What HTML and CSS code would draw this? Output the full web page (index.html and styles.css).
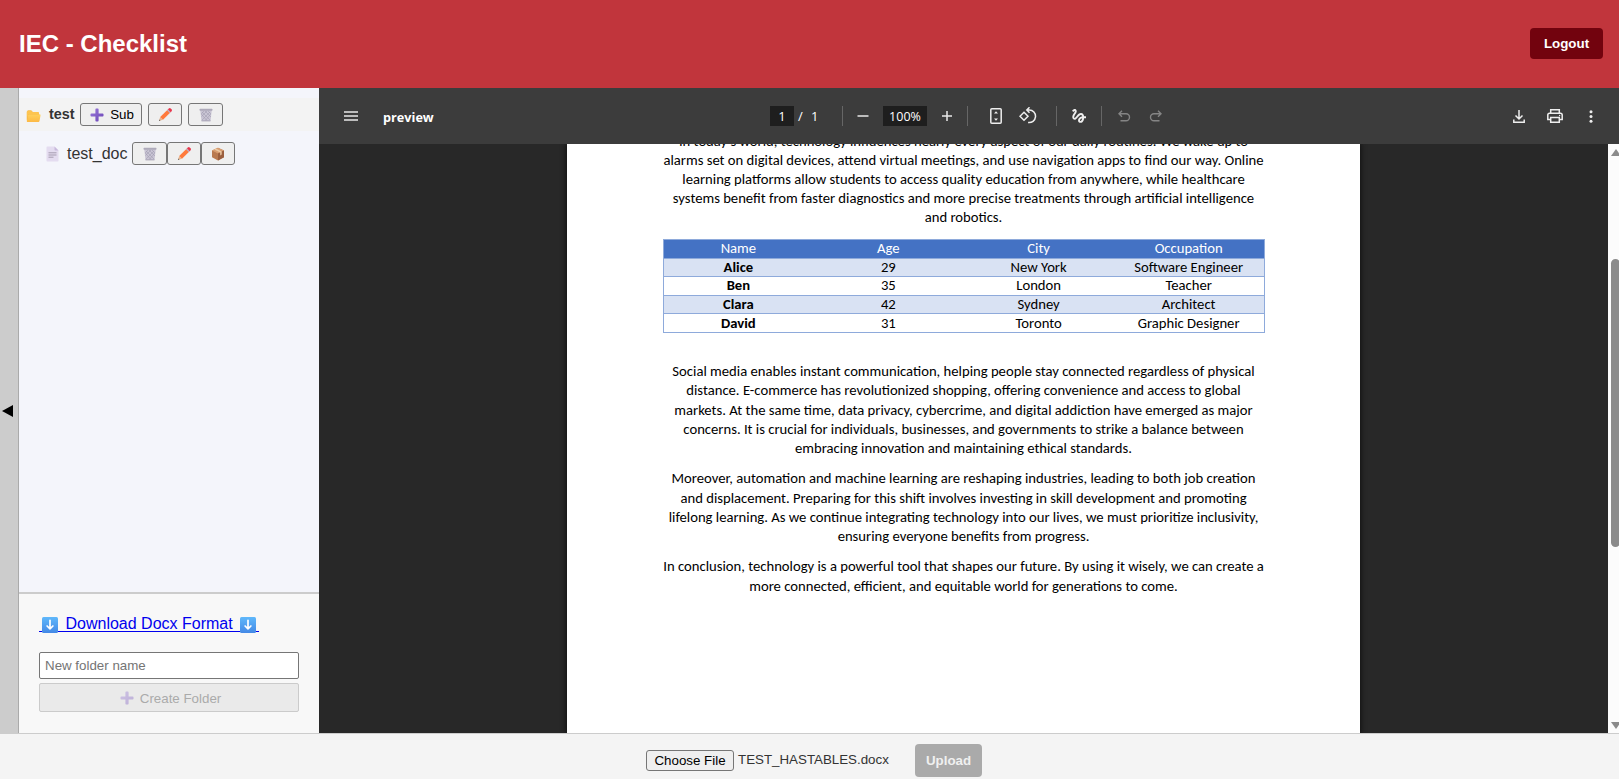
FILE: index.html
```
<!DOCTYPE html>
<html lang="en">
<head>
<meta charset="utf-8">
<title>IEC - Checklist</title>
<link rel="stylesheet" href="styles.css">
</head>
<body>
<svg class="defs" width="0" height="0" aria-hidden="true">
  <linearGradient id="purple" x1="0" y1="0" x2="1" y2="1"><stop offset="0" stop-color="#9b7bdb"/><stop offset="1" stop-color="#6a43b5"/></linearGradient>
  <linearGradient id="blue" x1="0" y1="0" x2="0" y2="1"><stop offset="0" stop-color="#5fb8fb"/><stop offset="1" stop-color="#4489e6"/></linearGradient>
  <linearGradient id="gold" x1="0" y1="0" x2="0" y2="1"><stop offset="0" stop-color="#ffd15c"/><stop offset="1" stop-color="#fdb944"/></linearGradient>
  <symbol id="plus" viewBox="0 0 14 14"><path d="M5.4 1.4q0-.9.8-.9h1.600q.8 0 .8.9v4h4q.9 0 .9.8v1.600q0 .8-.9.8h-4v4q0 .9-.8.9H6.200q-.8 0-.8-.9v-4h-4q-.9 0-.9-.8V6.200q0-.8.9-.8h4z" fill="url(#purple)"/></symbol>
  <symbol id="pencil" viewBox="0 0 16 16"><path d="M1 15l1.300-4.300 2.900 2.900z" fill="#e8b48c"/><path d="M1 15l.5-1.600 1.100 1.100z" fill="#555"/><path d="M2.300 10.700L10.200 2.800l3 3-7.900 7.900z" fill="#ff7a3c"/><path d="M9.500 3.500l1-1 3 3-1 1z" fill="#b9b3c6"/><path d="M10.500 2.500l1-1q1-.9 2 0l1 1q.9 1 0 2l-1 1z" fill="#e8364c"/></symbol>
  <symbol id="bin" viewBox="0 0 14 14"><path d="M1.200 2h11.600l-1.300 11h-9z" fill="#c9c5d4"/><path d="M3 4l8 8M6 3l6 6M9 3l3 3M2.300 6l6 7M11 4l-8 8M8 3L2.500 8.500M5 3L2.200 6M11.700 6L6 13" stroke="#a39eb1" stroke-width=".6"/><rect x=".5" y=".8" width="13" height="2" rx=".7" fill="#aeaaba"/><path d="M2.500 12.200h9v1.200h-9z" fill="#b0abbc"/></symbol>
  <symbol id="folder" viewBox="0 0 15 14"><path d="M1 3Q1 1.500 2.300 1.500h3l1.600 1.700h5q1.100 0 1.100 1.200v8H1z" fill="#e9a63a"/><path d="M3.200 5.200h10.300q1.200 0 1 1.200l-1 5.500q-.2 1.100-1.300 1.100H1.500q-.8 0-.7-1L2.100 6.200q.2-1 1.100-1z" fill="url(#gold)"/><path d="M.7 3Q.7 1.400 2.100 1.400h3l1.600 1.700h5q1.300 0 1.300 1.300v1H3.200q-1 0-1.200 1L.7 12z" fill="#fdc450"/></symbol>
  <symbol id="page" viewBox="0 0 13 16"><path d="M.5 1.200Q.5.500 1.200.500H8.500L12.500 4.500V14.800q0 .7-.7.700H1.200q-.7 0-.7-.7z" fill="#e4dcf0"/><path d="M8.500.5v3.200q0 .8.800.8h3.200z" fill="#c8b9dc"/><path d="M2.500 6.800h8M2.500 9h8M2.500 11.200h5" stroke="#a69caf"/></symbol>
  <symbol id="box" viewBox="0 0 14 14"><path d="M7 .7l6 2.700v6.900l-6 3.200-6-3.200V3.400z" fill="#b97a50"/><path d="M7 .7l6 2.700-6 3-6-3z" fill="#d89d70"/><path d="M7 6.400v7.100l6-3.200V3.400z" fill="#9b5f3e"/><path d="M3.200 2.400l6 3v3l1.500-.8V4.600L5 1.600z" fill="#ecc9a2"/></symbol>
  <symbol id="down" viewBox="0 0 16 16"><rect width="16" height="16" rx="1.500" fill="url(#blue)"/><path d="M8 3.300v8.500M5.100 9L8 11.900 10.900 9" fill="none" stroke="#fff" stroke-width="1.700" stroke-linecap="round" stroke-linejoin="round"/></symbol>
</svg>

<header class="topbar">
  <h1 class="brand">IEC - Checklist</h1>
  <button class="logout">Logout</button>
</header>

<main class="workspace">
  <div class="collapse"><svg width="11" height="14" viewBox="0 0 11 14"><path d="M11 1v12L0 7z"/></svg></div>
  <aside class="sidebar">
    <div class="tree">
      <div class="folder-row">
        <svg class="i-folder"><use href="#folder"/></svg>
        <strong class="folder-name">test</strong>
        <button class="btn btn-sub"><svg class="i14"><use href="#plus"/></svg>Sub</button>
        <button class="btn"><svg class="i16"><use href="#pencil"/></svg></button>
        <button class="btn btn-bin"><svg class="i14"><use href="#bin"/></svg></button>
      </div>
      <div class="doc-row">
        <svg class="i-page"><use href="#page"/></svg>
        <span class="doc-name">test_doc</span>
        <button class="btn btn-bin"><svg class="i14"><use href="#bin"/></svg></button>
        <button class="btn"><svg class="i16"><use href="#pencil"/></svg></button>
        <button class="btn"><svg class="i14"><use href="#box"/></svg></button>
      </div>
    </div>
    <div class="side-actions">
      <a class="download" href="#"><svg class="i-down"><use href="#down"/></svg><span>Download Docx Format</span><svg class="i-down"><use href="#down"/></svg></a>
      <input class="folder-input" placeholder="New folder name">
      <button class="create" disabled><svg class="i14"><use href="#plus"/></svg>Create Folder</button>
    </div>
  </aside>

  <section class="viewer">
    <div class="toolbar">
      <div class="tools-left">
        <svg class="menu" width="14" height="10" viewBox="0 0 14 10"><path d="M0 1h14M0 5h14M0 9h14" stroke="#e8e8e8" stroke-width="1.400"/></svg>
        <strong class="file-title">preview</strong>
      </div>
      <div class="tools-center">
        <span class="field page-field">1</span><span class="slash">/</span><span class="total">1</span>
        <i class="sep sep-a"></i>
        <svg class="minus" width="12" height="12" viewBox="0 0 12 12"><path d="M.5 6h11" stroke="#e8e8e8" stroke-width="1.500"/></svg>
        <span class="field zoom-field">100%</span>
        <svg class="plus" width="12" height="12" viewBox="0 0 12 12"><path d="M1 6h10M6 1v10" stroke="#e8e8e8" stroke-width="1.500"/></svg>
        <i class="sep sep-b"></i>
        <svg class="fit" width="12" height="16" viewBox="0 0 12 16"><rect x=".8" y=".8" width="10.400" height="14.400" rx="1" fill="none" stroke="#eee" stroke-width="1.500"/><path d="M6 3.300L8 5.600H4zM6 12.700L8 10.400H4z" fill="#eee"/></svg>
        <svg class="rotate" width="18" height="18" viewBox="0 0 18 18"><path d="M5 5.200L9 9.200 5 13.200 1 9.200z" fill="none" stroke="#eee" stroke-width="1.500"/><path d="M8 3h2.300a6.300 6.300 0 1 1-1.200 12.500M10.500.3L7.800 3l2.700 2.700" fill="none" stroke="#eee" stroke-width="1.500"/></svg>
        <i class="sep sep-c"></i>
        <svg class="draw" width="14" height="14" viewBox="2.800 3 18.200 18.200"><path fill="#eee" d="M4.590 6.890c.7-.71 1.400-1.350 1.710-1.220.5.2 0 1.030-.3 1.520-.25.42-2.860 3.890-2.860 6.310 0 1.280.48 2.340 1.340 2.980.75.56 1.740.73 2.640.46 1.070-.31 1.950-1.400 3.060-2.770 1.210-1.490 2.830-3.440 4.080-3.440 1.630 0 1.650 1.010 1.760 1.790-3.780.64-5.380 3.670-5.380 5.370 0 1.700 1.440 3.090 3.210 3.090 1.630 0 4.290-1.330 4.690-6.100H21v-2.500h-2.470c-.15-1.650-1.090-4.200-4.030-4.200-2.250 0-4.180 1.910-4.940 2.840-.58.73-2.060 2.480-2.290 2.720-.25.3-.68.84-1.110.84-.45 0-.72-.83-.36-1.920.35-1.090 1.400-2.860 1.850-3.520.78-1.140 1.300-1.920 1.300-3.280C8.950 3.690 7.310 3 6.440 3 5.120 3 3.970 4 3.720 4.250c-.36.36-.66.66-.88.93l1.750 1.710zm9.290 11.660c-.31 0-.74-.26-.74-.72 0-.6.73-2.200 2.870-2.760-.3 2.690-1.430 3.480-2.130 3.480z"/></svg>
        <i class="sep sep-d"></i>
        <svg class="undo" width="13" height="12" viewBox="0 0 13 12"><path d="M4 .8L1 3.800l3 3M1.300 3.800H8a3.500 3.500 0 0 1 0 7H2.500" fill="none" stroke="#858585" stroke-width="1.400"/></svg>
        <svg class="redo" width="13" height="12" viewBox="0 0 13 12"><path d="M9 .8l3 3-3 3M11.700 3.800H5a3.500 3.500 0 0 0 0 7h5.500" fill="none" stroke="#858585" stroke-width="1.400"/></svg>
      </div>
      <div class="tools-right">
        <svg width="12" height="13" viewBox="0 0 12 13"><path d="M6 0v8.500M2.500 5.500L6 9l3.500-3.500M.8 9.500v2.700h10.400V9.500" fill="none" stroke="#eee" stroke-width="1.500"/></svg>
        <svg class="print" width="16" height="14" viewBox="0 0 16 14"><path d="M3.700 4V.8h8.600V4M3.700 10.500H.8V6q0-1.800 1.800-1.800h10.800q1.800 0 1.800 1.800v4.500h-2.900M3.700 8.500h8.600v4.700H3.700z" fill="none" stroke="#eee" stroke-width="1.500"/><circle cx="12.600" cy="6.500" r=".7" fill="#eee"/></svg>
        <svg width="4" height="13" viewBox="0 0 4 13" fill="#eee"><circle cx="2" cy="1.700" r="1.500"/><circle cx="2" cy="6.500" r="1.500"/><circle cx="2" cy="11.300" r="1.500"/></svg>
      </div>
    </div>
    <div class="stage">
      <article class="paper">
        <p class="para first">In today's world, technology influences nearly every aspect of our daily routines. We wake up to<br>
          alarms set on digital devices, attend virtual meetings, and use navigation apps to find our way. Online<br>
          learning platforms allow students to access quality education from anywhere, while healthcare<br>
          systems benefit from faster diagnostics and more precise treatments through artificial intelligence<br>
          and robotics.</p>
        <table class="people">
          <tr><th>Name</th><th>Age</th><th>City</th><th>Occupation</th></tr>
          <tr><td>Alice</td><td>29</td><td>New York</td><td>Software Engineer</td></tr>
          <tr><td>Ben</td><td>35</td><td>London</td><td>Teacher</td></tr>
          <tr><td>Clara</td><td>42</td><td>Sydney</td><td>Architect</td></tr>
          <tr><td>David</td><td>31</td><td>Toronto</td><td>Graphic Designer</td></tr>
        </table>
        <p class="para">Social media enables instant communication, helping people stay connected regardless of physical<br>
          distance. E-commerce has revolutionized shopping, offering convenience and access to global<br>
          markets. At the same time, data privacy, cybercrime, and digital addiction have emerged as major<br>
          concerns. It is crucial for individuals, businesses, and governments to strike a balance between<br>
          embracing innovation and maintaining ethical standards.</p>
        <p class="para">Moreover, automation and machine learning are reshaping industries, leading to both job creation<br>
          and displacement. Preparing for this shift involves investing in skill development and promoting<br>
          lifelong learning. As we continue integrating technology into our lives, we must prioritize inclusivity,<br>
          ensuring everyone benefits from progress.</p>
        <p class="para">In conclusion, technology is a powerful tool that shapes our future. By using it wisely, we can create a<br>
          more connected, efficient, and equitable world for generations to come.</p>
      </article>
      <div class="scrollbar"><i class="arrow-up"></i><i class="thumb"></i><i class="arrow-down"></i></div>
    </div>
  </section>
</main>

<footer class="uploadbar">
  <button class="choose">Choose File</button>
  <span class="chosen">TEST_HASTABLES.docx</span>
  <button class="upload" disabled>Upload</button>
</footer>
</body>
</html>
```

FILE: styles.css
```
* { box-sizing: border-box; }
body { margin: 0; width: 1619px; height: 779px; overflow: hidden; display: flex; flex-direction: column; font-family: "Liberation Sans", Arial, sans-serif; font-size: 16px; background: #f4f4f4; color: #333; }
svg { display: block; flex: none; }
button { font-family: inherit; }
.defs { position: absolute; }

.topbar { height: 88px; flex: none; background: #c1353c; display: flex; align-items: center; justify-content: space-between; padding: 0 16px 1px 19px; }
.brand { margin: 0; font-size: 24px; color: #fff; }
.logout { width: 73px; height: 31px; padding: 0; border: 0; border-radius: 4px; background: #72030e; color: #fff; font-size: 13.333px; font-weight: bold; }

.workspace { height: 645px; flex: none; display: flex; }
.collapse { width: 19px; flex: none; background: #ccc; border-right: 1px solid #aaa; display: flex; align-items: center; padding-left: 2px; color: #000; }
.sidebar { width: 300px; flex: none; display: flex; flex-direction: column; }
.tree { height: 504px; padding-top: 10px; background: #f4f5fb; }
.folder-row { height: 33px; background: #f3f3f3; display: flex; align-items: center; padding-left: 7px; }
.folder-name { width: 31px; margin-left: 8px; padding-bottom: 1px; font-size: 14.400px; }
.i-folder { width: 15px; height: 14px; margin-top: 3px; }
.i-page { width: 13px; height: 16px; }
.i14 { width: 14px; height: 14px; }
.i16 { width: 15px; height: 15px; }
.btn { width: 34px; height: 23px; padding: 0; border: 1px solid #767676; border-radius: 3px; background: #efefef; color: #000; font-size: 13.333px; display: flex; align-items: center; justify-content: center; }
.folder-row .btn { margin-right: 6px; }
.folder-row .btn-sub { width: 62px; gap: 6px; }
.folder-row .btn-sub { padding-left: 2px; }
.btn-bin { width: 35px; }
.doc-row { height: 45px; display: flex; align-items: center; padding-left: 27px; }
.doc-name { width: 65px; margin-left: 8px; }
.side-actions { flex: 1; border-top: 2px solid #ccc; background: #f8f8f8; padding: 20px 20px 0; display: flex; flex-direction: column; align-items: flex-start; }
.download { position: relative; height: 20px; display: flex; align-items: center; padding: 3px 3px 0; gap: 7.500px; color: #00e; text-decoration: none; margin-bottom: 19px; margin-top: -1px; }
.download::before { content: ""; position: absolute; left: 0; right: 0; bottom: 1px; height: 1px; background: #00e; }
.download svg { position: relative; }
.download span { padding-bottom: 1px; }
.i-down { width: 16px; height: 16px; }
.folder-input { width: 260px; height: 27px; padding: 0 5px; border: 1px solid #767676; border-radius: 2px; font-family: inherit; font-size: 13.333px; }
.folder-input::placeholder { color: #757575; }
.create { width: 260px; height: 29px; margin-top: 4px; padding: 1px 0 0 3px; border: 1px solid #cbcbcb; border-radius: 2px; background: #eaeaea; color: #aaa; font-size: 13.333px; display: flex; align-items: center; justify-content: center; gap: 6px; }
.create svg { opacity: .35; }

.viewer { flex: 1; min-width: 0; display: flex; flex-direction: column; }
.toolbar { height: 56px; flex: none; background: #3c3c3c; display: grid; grid-template-columns: 451px 1fr auto; align-items: center; color: #fff; font-family: "Open Sans", "Noto Sans", sans-serif; font-size: 13px; }
.tools-left, .tools-center, .tools-right { display: flex; align-items: center; }
.menu { margin-left: 25px; }
.file-title { margin-left: 25px; padding-top: 1px; font-size: 12.700px; }
.field { height: 20px; background: #1e1e1e; display: flex; align-items: center; justify-content: center; }
.page-field { width: 24px; }
.slash { margin-left: 4px; width: 13px; }
.total { width: 8px; }
.sep { width: 1px; height: 20px; background: #666; }
.sep-a { margin-left: 23px; }
.minus { margin-left: 14px; }
.zoom-field { width: 44px; margin-left: 14px; font-size: 12.500px; }
.plus { margin-left: 14px; }
.sep-b { margin-left: 14px; }
.fit { margin-left: 22px; }
.rotate { margin-left: 17px; }
.sep-c { margin-left: 19px; }
.draw { margin-left: 15px; }
.sep-d { margin-left: 15px; }
.undo { margin-left: 16px; }
.redo { margin-left: 18px; }
.tools-right { gap: 22px; padding-right: 26px; }
.print { margin-right: 4px; }

.stage { flex: 1; min-height: 0; display: flex; justify-content: space-between; background: #282828; overflow: hidden; }
.paper { width: 793px; margin-left: 248px; background: #fff; box-shadow: 0 0 5px 1px #111; color: #000; font-family: Carlito, Calibri, Lato, sans-serif; font-size: 14.667px; display: flex; flex-direction: column; align-items: center; }
.para { margin: 0 0 10.900px; line-height: 19.300px; white-space: nowrap; text-align: center; }
.first { margin-top: -12px; margin-bottom: 11.500px; line-height: 19.100px; }
.people { width: 602px; height: 94px; margin-bottom: 29px; border-collapse: collapse; table-layout: fixed; border: 1px solid #8eaadb; text-align: center; }
.people th, .people td { padding: 0; height: 18.600px; line-height: 17px; border-bottom: 1px solid #8eaadb; }
.people th { background: #4472c4; color: #fff; font-weight: normal; }
.people tr:nth-child(even) { background: #d9e2f3; }
.people td:first-child { font-weight: bold; }

.scrollbar { width: 11px; background: #fcfcfc; display: flex; flex-direction: column; align-items: flex-start; padding-left: 3px; overflow: hidden; }
.scrollbar i { flex: none; }
.arrow-up { margin-top: 5px; border: 5px solid transparent; border-top: 0; border-bottom: 7px solid #8b8b8b; }
.thumb { width: 9px; height: 288px; margin-top: 103px; border-radius: 5px; background: #8b8b8b; }
.arrow-down { margin-top: 175px; border: 5px solid transparent; border-bottom: 0; border-top: 7px solid #8b8b8b; }

.uploadbar { flex: 1; border-top: 1px solid #ccc; background: #f4f4f4; display: flex; align-items: flex-start; padding: 10px 0 0 646px; font-size: 13.333px; }
.choose { width: 88px; height: 21px; margin-top: 6px; padding: 0; border: 1px solid #767676; border-radius: 3px; background: #efefef; color: #000; font-size: 13.333px; }
.chosen { width: 177px; margin: 8px 0 0 4px; }
.upload { width: 67px; height: 33px; padding: 0; border: 0; border-radius: 4px; background: #aaa; color: #f0f0f0; font-size: 13.333px; font-weight: bold; }
```
